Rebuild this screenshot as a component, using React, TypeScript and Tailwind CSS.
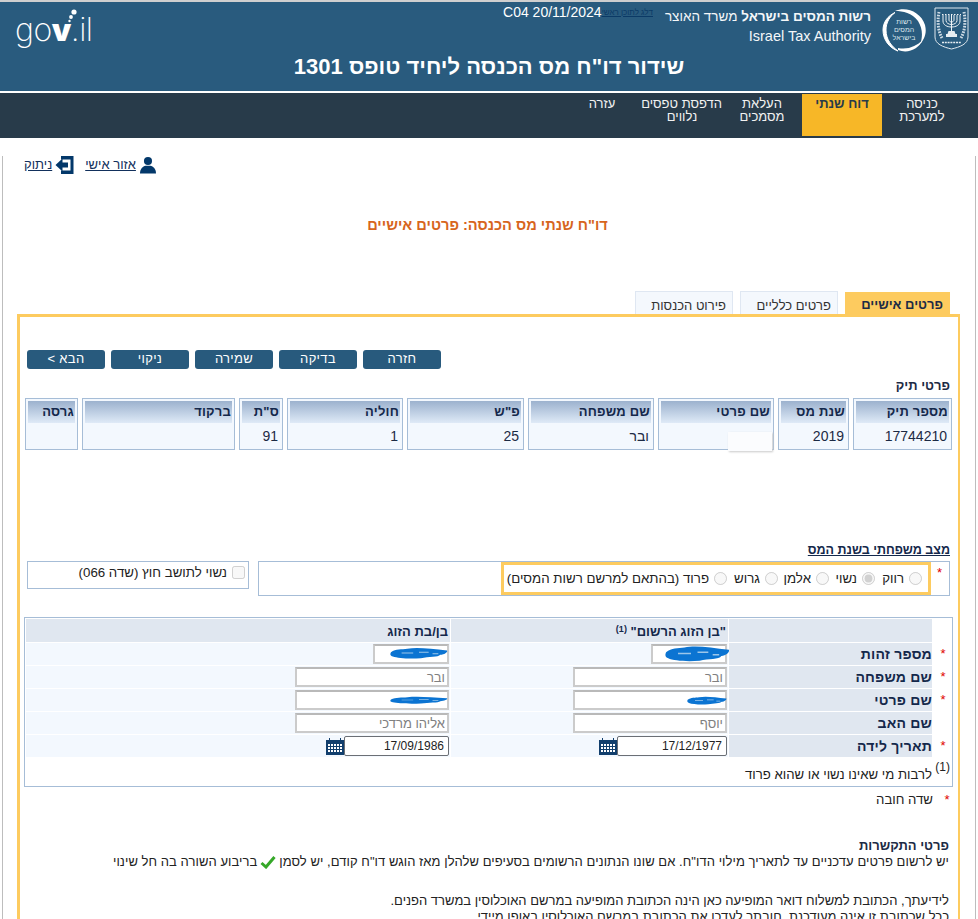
import React from "react";

const FONT = "font-['Liberation_Sans',Arial,sans-serif]";

function Emblem() {
  return (
    <svg width="35" height="43" viewBox="0 0 35 43" className="shrink-0" fill="none">
      <path d="M1 1H34V30C34 37 26 40 17.5 42C9 40 1 37 1 30Z" stroke="#dfe8ee" strokeWidth="1" />
      <path d="M9 8V14C9 18 13 20 17.5 20C22 20 26 18 26 14V8M12 8V13.5C12 16 15 17.5 17.5 17.5C20 17.5 23 16 23 13.5V8M15 8V13C15 14.2 16.3 15 17.5 15C18.7 15 20 14.2 20 13V8M17.5 7V24" stroke="#eef3f6" strokeWidth="1" />
      <path d="M8 7.5H27" stroke="#eef3f6" strokeWidth="1" strokeDasharray="1.5 1.5" />
      <path d="M14.5 24H20.5L21.5 27H23V30H12V27H13.5Z" fill="#e6edf2" />
      <path d="M5 5C3.5 13 3.5 23 8 31M30 5C31.5 13 31.5 23 27 31" stroke="#cfdce5" strokeWidth="3" strokeDasharray="1.6 1.2" />
      <path d="M8 35.5H27" stroke="#e6edf2" strokeWidth="1.6" strokeDasharray="2 .8" />
    </svg>
  );
}

function TaxLogo() {
  return (
    <div className="relative w-[46px] h-[46px] shrink-0">
      <svg width="46" height="46" viewBox="0 0 46 46" className="absolute inset-0" fill="none">
        <path d="M14 5.5C6.5 9 2 15.5 2 23C2 33 8.5 41 17 44C11 39.5 5 33 5 23C5 15 9 9.5 14 5.5Z" fill="#fff" stroke="#fff" strokeWidth="1" />
        <path d="M14 4C25 -1 40 5 44 18C46.5 28 42 33 39.5 37C41.5 29 42 22 37 14C31 6 22 4 14 4Z" fill="#fff" />
        <path d="M17 43C27 47 38 42 41.5 33C36 39 27 43 17 41Z" fill="#fff" />
      </svg>
      <div className="absolute inset-0 flex flex-col items-center justify-center text-[#dbe5ec] text-[7px] leading-[8px] text-center">
        <span>רשות</span>
        <span>המסים</span>
        <span>בישראל</span>
      </div>
    </div>
  );
}

function GovLogo() {
  return (
    <div dir="ltr" className="relative w-[80px] h-[42px] text-white">
      <div className="absolute left-0 top-[5px] flex items-baseline font-['Inter',sans-serif] text-[32px] leading-[36px] tracking-[-0.5px]">
        <span className="font-extralight">go</span>
        <span className="font-black text-[31px]">v</span>
        <span className="font-extralight">.il</span>
      </div>
      <svg width="20" height="16" viewBox="0 0 20 16" className="absolute left-[47px] top-[1px]" fill="#fff">
        <circle cx="12" cy="4" r="2.6" />
        <circle cx="9" cy="9" r="1.9" />
        <circle cx="7.5" cy="13" r="1.2" />
      </svg>
    </div>
  );
}

function PersonIcon() {
  return (
    <svg width="16" height="18" viewBox="0 0 17 18" fill="#03386a">
      <circle cx="8.5" cy="4.8" r="4.3" />
      <path d="M0 18C0 13 3 10.5 6 9.8H11C14 10.5 17 13 17 18Z" />
    </svg>
  );
}

function LogoutIcon() {
  return (
    <svg width="19" height="18" viewBox="0 0 19 18" fill="#03386a">
      <path d="M6 0H18.5V18H6V14.5H15.5V3.5H6Z" />
      <path d="M0.5 9L7.5 2.5V6.5H13V11.5H7.5V15.5Z" />
    </svg>
  );
}

function CalendarIcon() {
  return (
    <svg width="18" height="17" viewBox="0 0 18 17" className="shrink-0" fill="#123f6d">
      <path d="M0 2H3V0H4V2H14V0H15V2H18V17H0Z" />
      <g fill="#fff">
        <rect x="2" y="6" width="2" height="2" /><rect x="5" y="6" width="2" height="2" /><rect x="8" y="6" width="2" height="2" /><rect x="11" y="6" width="2" height="2" /><rect x="14" y="6" width="2" height="2" />
        <rect x="2" y="9" width="2" height="2" /><rect x="5" y="9" width="2" height="2" /><rect x="8" y="9" width="2" height="2" /><rect x="11" y="9" width="2" height="2" /><rect x="14" y="9" width="2" height="2" />
        <rect x="2" y="12" width="2" height="2" /><rect x="5" y="12" width="2" height="2" /><rect x="8" y="12" width="2" height="2" /><rect x="11" y="12" width="2" height="2" /><rect x="14" y="12" width="2" height="2" />
      </g>
    </svg>
  );
}

function Scribble({ className, w, h }: { className: string; w: number; h: number }) {
  return (
    <svg width={w} height={h} viewBox="0 0 60 14" preserveAspectRatio="none" className={"absolute " + className} fill="#0b74d2">
      <path d="M1 6C6 2 12 3 18 2C28 0 42 2 59 4C60 6 56 9 52 9C50 12 40 11 32 13C20 14 8 13 3 11C0 10 0 8 1 6Z" />
      <path d="M12 7H24M30 6H40M44 8H50" stroke="#9cc6ea" strokeWidth="1.2" fill="none" />
    </svg>
  );
}

function NavItem({ lines, active }: { lines: string[]; active?: boolean }) {
  return (
    <div
      className={
        "w-[80px] h-[42px] pt-[3px] text-center text-[13px] leading-[13px] whitespace-nowrap " +
        (active ? "bg-[#f7b727] text-[#283b4a] font-bold" : "text-[#f2f2f2]")
      }
    >
      {lines.map((l) => (
        <div key={l}>{l}</div>
      ))}
    </div>
  );
}

function FileCell({ w, title, value }: { w: string; title: string; value?: string }) {
  return (
    <div className={w + " h-[52px] border border-[#a6bdd7] bg-[#f3f8fe] p-[2px]"}>
      <div className="h-[22px] bg-gradient-to-b from-[#9cb2ce] to-[#dfeaf7] px-px text-[13px] leading-[22px] font-bold text-[#14284b] tracking-[0.2px]">
        {title}
      </div>
      <div className="h-[24px] px-[2px] text-[14px] leading-[26px] text-[#1c2a44]">{value}</div>
    </div>
  );
}

function Radio({ label, checked, w }: { label: string; checked?: boolean; w: string }) {
  return (
    <label className={w + " flex items-center gap-[5px] text-[13.3px] text-[#222]"}>
      <input type="radio" disabled defaultChecked={checked} className="m-0 w-[13px] h-[13px]" />
      <span className="whitespace-nowrap">{label}</span>
    </label>
  );
}

function Field({ w, value, gray }: { w: string; value?: string; gray?: boolean }) {
  return (
    <input
      readOnly
      dir="rtl"
      value={value ?? ""}
      className={
        w +
        " h-[20px] border-2 border-[#cbcbcb] border-t-[#b9b9b9] bg-white px-[2px] text-[13px] outline-none " +
        (gray ? "text-[#808080]" : "text-[#333]")
      }
    />
  );
}

function DateField({ value, w }: { value: string; w: string }) {
  return (
    <div className="flex items-center h-[22px]">
      <input
        readOnly
        dir="ltr"
        value={value}
        className={w + " h-[20px] border border-[#6b6f75] rounded-[2px] bg-white px-[4px] text-right text-[12px] text-[#222] outline-none"}
      />
      <CalendarIcon />
    </div>
  );
}

function Star({ className = "" }: { className?: string }) {
  return <span className={"text-[#e00000] text-[13px] leading-[20px] " + className}>*</span>;
}

function Row({
  label,
  star = true,
  col2,
  col3,
}: {
  label: string;
  star?: boolean;
  col2: React.ReactNode;
  col3: React.ReactNode;
}) {
  return (
    <>
      <div className="h-[22px] flex items-center justify-center pl-[1px]">{star && <Star />}</div>
      <div className="h-[22px] bg-[#e0e7f0] text-[14px] leading-[23px] font-bold text-[#14284b] tracking-[0.2px]">{label}</div>
      <div className="relative h-[22px] bg-[#f3f8fe] flex items-center pr-px">{col2}</div>
      <div className="relative h-[22px] bg-[#f3f8fe] flex items-center pr-px">{col3}</div>
    </>
  );
}

export default function App() {
  return (
    <div dir="rtl" className={FONT + " w-[978px] h-[919px] overflow-hidden bg-white text-[13px] text-[#222]"}>
      <div className="h-[2px] bg-[#cfcfcf]" />
      <header className="h-[89px] bg-[#295b7e] text-white">
        <div className="flex h-[52px]">
          <div className="flex items-start gap-[7px] pt-[5px] pr-[9px] w-[325px]">
            <Emblem />
            <TaxLogo />
            <div className="pr-[3px] whitespace-nowrap text-[#f4f7f9]">
              <div className="text-[13.5px] leading-[20px]">
                <b>רשות המסים בישראל</b> משרד האוצר
              </div>
              <div dir="ltr" className="text-right text-[14.5px] leading-[18px] font-light">
                Israel Tax Authority
              </div>
            </div>
          </div>
          <div className="flex items-start pt-[1px] flex-1">
            <div className="text-[8px] leading-[18px] text-[#0b3a66] underline whitespace-nowrap pt-[1px]">דלג לתוכן ראשי</div>
            <div dir="ltr" className="text-[14px] leading-[18px] whitespace-nowrap text-white">C04 20/11/2024</div>
            <div className="flex-1 flex justify-end pl-[15px] pt-[4px]">
              <GovLogo />
            </div>
          </div>
        </div>
        <h1 className="mt-[-1px] text-center text-[22px] leading-[28px] font-bold text-white">שידור דו"ח מס הכנסה ליחיד טופס 1301</h1>
      </header>
      <div className="h-[2px] bg-white" />
      <nav className="h-[45px] bg-[#283b4a] flex pr-[16px] pt-px">
        <NavItem lines={["כניסה", "למערכת"]} />
        <NavItem lines={["דוח שנתי"]} active />
        <NavItem lines={["העלאת", "מסמכים"]} />
        <NavItem lines={["הדפסת טפסים", "נלווים"]} />
        <NavItem lines={["עזרה"]} />
      </nav>

      <main className="mx-[2px] h-[781px] border-x border-[#bdbdbd]">
        <div dir="ltr" className="flex items-center h-[18px] mt-[18px] pl-[21px] text-[13px] text-[#12305c]">
          <span dir="rtl" className="underline">ניתוק</span>
          <span className="ml-[3px]"><LogoutIcon /></span>
          <span dir="rtl" className="underline ml-[11px]">אזור אישי</span>
          <span className="ml-[4px]"><PersonIcon /></span>
        </div>

        <h2 className="mt-[41px] h-[20px] text-center text-[14.6px] leading-[20px] font-bold text-[#d7651d] pr-[3px]">
          דו"ח שנתי מס הכנסה: פרטים אישיים
        </h2>

        <div className="mt-[56px] flex items-end h-[23px] pr-[25px] gap-[7px]">
          <div className="w-[105px] h-[22px] pr-[7px] bg-[#fdcb5f] text-[13px] leading-[26px] font-bold text-[#1d2b45]">פרטים אישיים</div>
          <div className="w-[98px] h-[23px] pr-[6px] border border-b-0 border-[#dfe7f2] bg-[#f4f8fd] text-[13px] leading-[27px] text-[#333]">פרטים כלליים</div>
          <div className="w-[98px] h-[23px] pr-[6px] border border-b-0 border-[#dfe7f2] bg-[#f4f8fd] text-[13px] leading-[27px] text-[#333]">פירוט הכנסות</div>
        </div>

        <section className="ml-[14px] mr-[15px] h-[700px] border-[3px] border-b-0 border-[#fdcb5f] border-r-[2px]">
          <div className="mt-[33px] flex justify-end gap-[6px] pl-[7px]">
            {["חזרה", "בדיקה", "שמירה", "ניקוי", "הבא >"].map((t) => (
              <div key={t} className="w-[78px] h-[19px] rounded-[3px] bg-[#285a7d] text-center text-[13px] leading-[18px] text-white tracking-[0.3px]">
                {t}
              </div>
            ))}
          </div>

          <div className="mt-[9px] pr-[8px] text-[13px] leading-[16px] font-bold text-[#1d2b45]">פרטי תיק</div>

          <div className="relative mt-[4px] flex gap-[4px] pr-[6px] pl-[5px]">
            <FileCell w="w-[99px]" title="מספר תיק" value="17744210" />
            <FileCell w="w-[71px]" title="שנת מס" value="2019" />
            <FileCell w="w-[116px]" title="שם פרטי" />
            <FileCell w="w-[126px]" title="שם משפחה" value="ובר" />
            <FileCell w="w-[117px]" title={'פ"ש'} value="25" />
            <FileCell w="w-[116px]" title="חוליה" value="1" />
            <FileCell w="w-[44px]" title={'ס"ת'} value="91" />
            <FileCell w="w-[153px]" title="ברקוד" />
            <FileCell w="w-[53px]" title="גרסה" />
            <div className="absolute right-[186px] top-[34px] w-[44px] h-[19px] bg-[#fbfcfe] shadow-[1px_1px_2px_#c9c9c9]" />
          </div>

          <div className="mt-[92px] pr-[8px] text-[12.5px] leading-[16px] font-bold text-[#14284b] underline">מצב משפחתי בשנת המס</div>

          <div className="mt-[3px] flex items-start pr-[8px] pl-[7px]">
            <div className="flex items-center w-[692px] h-[35px] border border-[#a6bdd7] pr-[18px]">
              <div className="relative flex items-center w-[430px] h-[33px] border-[3px] border-[#fdcb5f] pr-[6px]">
                <Radio w="w-[47px]" label="רווק" />
                <Radio w="w-[46px]" label="נשוי" checked />
                <Radio w="w-[51px]" label="אלמן" />
                <Radio w="w-[51px]" label="גרוש" />
                <Radio w="w-[220px]" label="פרוד (בהתאם למרשם רשות המסים)" />
                <Star className="absolute right-[-14px] top-[-2px]" />
              </div>
            </div>
            <div className="mr-[9px] flex items-start w-[222px] h-[28px] border border-[#a6bdd7] pr-[3px] pt-[3px] gap-[5px] text-[13.3px] leading-[16px]">
              <input type="checkbox" disabled className="m-0 mt-px w-[13px] h-[13px]" />
              <span>נשוי לתושב חוץ (שדה 066)</span>
            </div>
          </div>

          <div className="mt-[21px] mr-[5px] ml-[4px] h-[170px] border border-[#a6bdd7]">
            <div className="grid grid-cols-[19px_203px_277px_424px] gap-px pt-px">
              <div />
              <div className="h-[23px] bg-[#e0e7f0]" />
              <div className="h-[23px] bg-[#e0e7f0] pr-[2px] text-[13px] leading-[25px] font-bold text-[#14284b]">
                "בן הזוג הרשום" <sup className="text-[9px]">(1)</sup>
              </div>
              <div className="h-[23px] bg-[#e0e7f0] pr-[2px] text-[13px] leading-[25px] font-bold text-[#14284b]">בן/בת הזוג</div>

              <Row
                label="מספר זהות"
                col2={<><Field w="w-[76px]" /><Scribble className="right-[-2px] top-[2px]" w={65} h={17} /></>}
                col3={<><Field w="w-[76px]" /><Scribble className="right-[2px] top-[4px]" w={58} h={12} /></>}
              />
              <Row label="שם משפחה" col2={<Field w="w-[154px]" value="ובר" gray />} col3={<Field w="w-[154px]" value="ובר" gray />} />
              <Row
                label="שם פרטי"
                col2={<><Field w="w-[154px]" /><Scribble className="right-[1px] top-[7px]" w={40} h={9} /></>}
                col3={<><Field w="w-[154px]" /><Scribble className="right-[2px] top-[7px]" w={58} h={8} /></>}
              />
              <Row label="שם האב" star={false} col2={<Field w="w-[154px]" value="יוסף" gray />} col3={<Field w="w-[154px]" value="אליהו מרדכי" gray />} />
              <Row label="תאריך לידה" col2={<DateField w="w-[110px]" value="17/12/1977" />} col3={<DateField w="w-[105px]" value="17/09/1986" />} />
            </div>
            <div className="pr-[2px] pt-[3px] text-[13.2px] leading-[16px]">
              <div className="flex items-start">
                <span className="w-[18px] shrink-0 text-[12px] leading-[14px]">(1)</span>
                <span className="mt-[7px]">לרבות מי שאינו נשוי או שהוא פרוד</span>
              </div>
            </div>
          </div>

          <div className="mt-[3px] flex items-center h-[20px] pr-[2px] text-[13.2px]">
            <Star className="w-[18px] text-center" />
            <span className="pr-[5px]">שדה חובה</span>
          </div>

          <div className="mt-[28px] pr-[9px] text-[13px] leading-[16px] text-[#222]">
            <div className="font-bold text-[#1d2b45]">פרטי התקשרות</div>
            <div className="flex items-center whitespace-nowrap tracking-[0.05px]">
              <span>יש לרשום פרטים עדכניים עד לתאריך מילוי הדו"ח. אם שונו הנתונים הרשומים בסעיפים שלהלן מאז הוגש דו"ח קודם, יש לסמן</span>
              <svg width="16" height="14" viewBox="0 0 16 14" className="mx-[3px] shrink-0" fill="none">
                <path d="M1.5 8L6 12L14.5 2" stroke="#36a829" strokeWidth="3" />
              </svg>
              <span>בריבוע השורה בה חל שינוי</span>
            </div>
            <div className="mt-[23px]">לידיעתך, הכתובת למשלוח דואר המופיעה כאן הינה הכתובת המופיעה במרשם האוכלוסין במשרד הפנים.</div>
            <div>ככל שכתובת זו אינה מעודכנת, חובתך לעדכן את הכתובת במרשם האוכלוסין באופן מיידי</div>
          </div>
        </section>
      </main>
    </div>
  );
}
